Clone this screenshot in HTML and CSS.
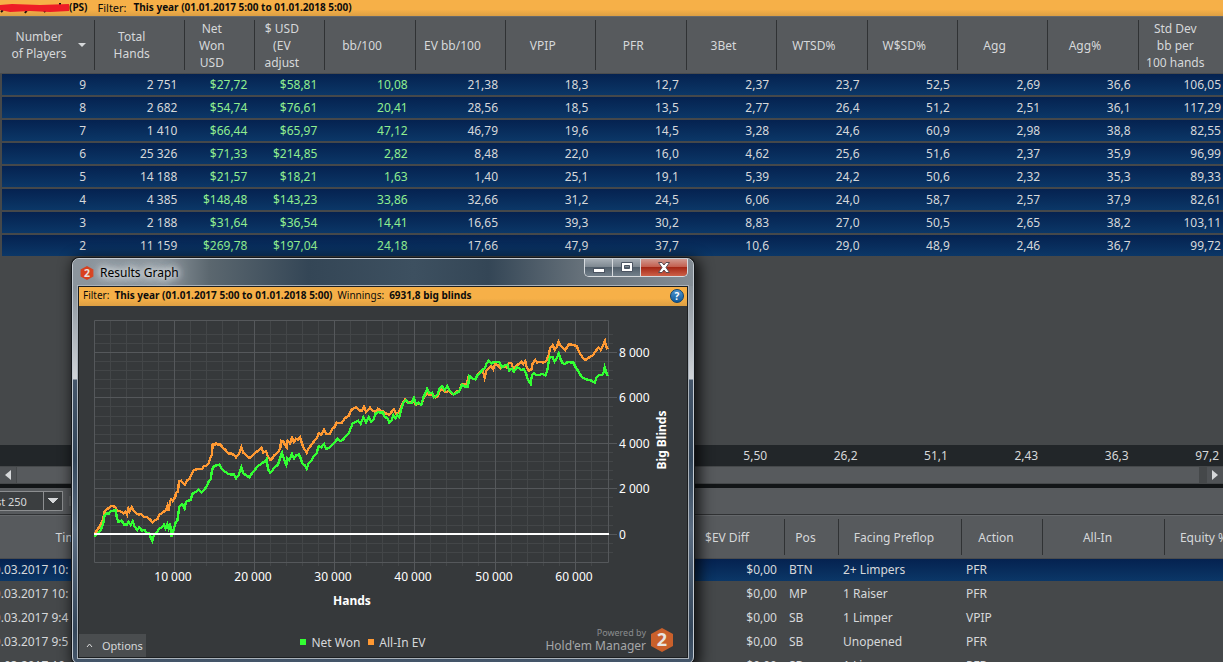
FILE: index.html
```html
<!DOCTYPE html>
<html lang="en">
<head>
  <meta charset="UTF-8">
  <meta name="viewport" content="width=device-width, initial-scale=1.0">
  <title>Results Graph</title>
  <link rel="stylesheet" href="styles.css">
</head>
<body>

  <div class="filter-bar">
    <svg class="scribble" width="69" height="13" viewBox="0 0 69 13" aria-hidden="true">
      <path d="M1 11l2-2M25 12l2-3M44 11l2-2M59 3h2" stroke="#111" stroke-width="2" />
      <path d="M0 4L12 3L40 4L69 3V10L50 11L30 10L10 11L0 9Z" fill="#ee1c25" />
    </svg>
    <b>(PS)</b>
    <span class="filter-label">Filter:</span>
    <b>This year (01.01.2017 5:00 to 01.01.2018 5:00)</b>
  </div>

  <main class="stats-pane">
    <table class="grid stats">
      <colgroup>
        <col class="w-players"><col class="w-stat"><col class="w-money"><col class="w-money"><col class="w-stat">
        <col class="w-stat"><col class="w-stat"><col class="w-stat"><col class="w-stat"><col class="w-stat">
        <col class="w-stat"><col class="w-stat"><col class="w-stat"><col class="w-stat">
      </colgroup>
      <thead>
        <tr>
          <th class="sorted"><div>Number<br>of Players</div></th>
          <th><div>Total<br>Hands</div></th>
          <th><div>Net<br>Won<br>USD</div></th>
          <th><div>$ USD<br>(EV<br>adjust</div></th>
          <th><div>bb/100</div></th>
          <th><div>EV bb/100</div></th>
          <th><div>VPIP</div></th>
          <th><div>PFR</div></th>
          <th><div>3Bet</div></th>
          <th><div>WTSD%</div></th>
          <th><div>W$SD%</div></th>
          <th><div>Agg</div></th>
          <th><div>Agg%</div></th>
          <th><div>Std Dev<br>bb per<br>100 hands</div></th>
        </tr>
      </thead>
      <tbody>
        <tr><td>9</td><td>2 751</td><td class="win">$27,72</td><td class="win">$58,81</td><td class="win">10,08</td><td>21,38</td><td>18,3</td><td>12,7</td><td>2,37</td><td>23,7</td><td>52,5</td><td>2,69</td><td>36,6</td><td>106,05</td></tr>
        <tr><td>8</td><td>2 682</td><td class="win">$54,74</td><td class="win">$76,61</td><td class="win">20,41</td><td>28,56</td><td>18,5</td><td>13,5</td><td>2,77</td><td>26,4</td><td>51,2</td><td>2,51</td><td>36,1</td><td>117,29</td></tr>
        <tr><td>7</td><td>1 410</td><td class="win">$66,44</td><td class="win">$65,97</td><td class="win">47,12</td><td>46,79</td><td>19,6</td><td>14,5</td><td>3,28</td><td>24,6</td><td>60,9</td><td>2,98</td><td>38,8</td><td>82,55</td></tr>
        <tr><td>6</td><td>25 326</td><td class="win">$71,33</td><td class="win">$214,85</td><td class="win">2,82</td><td>8,48</td><td>22,0</td><td>16,0</td><td>4,62</td><td>25,6</td><td>51,6</td><td>2,37</td><td>35,9</td><td>96,99</td></tr>
        <tr><td>5</td><td>14 188</td><td class="win">$21,57</td><td class="win">$18,21</td><td class="win">1,63</td><td>1,40</td><td>25,1</td><td>19,1</td><td>5,39</td><td>24,2</td><td>50,6</td><td>2,32</td><td>35,3</td><td>89,33</td></tr>
        <tr><td>4</td><td>4 385</td><td class="win">$148,48</td><td class="win">$143,23</td><td class="win">33,86</td><td>32,66</td><td>31,2</td><td>24,5</td><td>6,06</td><td>24,0</td><td>58,7</td><td>2,57</td><td>37,9</td><td>82,61</td></tr>
        <tr><td>3</td><td>2 188</td><td class="win">$31,64</td><td class="win">$36,54</td><td class="win">14,41</td><td>16,65</td><td>39,3</td><td>30,2</td><td>8,83</td><td>27,0</td><td>50,5</td><td>2,65</td><td>38,2</td><td>103,11</td></tr>
        <tr><td>2</td><td>11 159</td><td class="win">$269,78</td><td class="win">$197,04</td><td class="win">24,18</td><td>17,66</td><td>47,9</td><td>37,7</td><td>10,6</td><td>29,0</td><td>48,9</td><td>2,46</td><td>36,7</td><td>99,72</td></tr>
      </tbody>
    </table>

    <table class="grid totals">
      <colgroup>
        <col class="w-players"><col class="w-stat"><col class="w-money"><col class="w-money"><col class="w-stat">
        <col class="w-stat"><col class="w-stat"><col class="w-stat"><col class="w-stat"><col class="w-stat">
        <col class="w-stat"><col class="w-stat"><col class="w-stat"><col class="w-stat">
      </colgroup>
      <tbody>
        <tr><td></td><td></td><td></td><td></td><td></td><td></td><td></td><td></td><td>5,50</td><td>26,2</td><td>51,1</td><td>2,43</td><td>36,3</td><td>97,2</td></tr>
      </tbody>
    </table>

    <div class="scrollbar">
      <button class="scroll-btn" aria-label="Scroll left"><svg width="6" height="10"><path d="M6 0V10L0 5Z" /></svg></button>
      <div class="scroll-thumb"></div>
      <button class="scroll-btn" aria-label="Scroll right"><svg width="6" height="10"><path d="M0 0V10L6 5Z" /></svg></button>
    </div>
  </main>

  <section class="hands-pane">
    <div class="hands-scroll">
      <div class="toolbar">
        <select class="limit" aria-label="Hands shown">
          <option>Last 250</option>
        </select>
        <span class="grip"></span>
      </div>
      <table class="grid hands">
        <colgroup>
          <col class="w-time"><col class="w-rest"><col class="w-diff"><col class="w-pos"><col class="w-facing">
          <col class="w-action"><col class="w-allin"><col class="w-equity">
        </colgroup>
        <thead>
          <tr>
            <th><div>Time</div></th><th><div></div></th><th><div>$EV Diff</div></th><th><div>Pos</div></th>
            <th><div>Facing Preflop</div></th><th><div>Action</div></th><th><div>All-In</div></th><th><div>Equity %</div></th>
          </tr>
        </thead>
        <tbody>
          <tr class="selected"><td>30.03.2017 10:</td><td></td><td class="num">$0,00</td><td>BTN</td><td>2+ Limpers</td><td>PFR</td><td></td><td></td></tr>
          <tr><td>30.03.2017 10:</td><td></td><td class="num">$0,00</td><td>MP</td><td>1 Raiser</td><td>PFR</td><td></td><td></td></tr>
          <tr><td>30.03.2017 9:4</td><td></td><td class="num">$0,00</td><td>SB</td><td>1 Limper</td><td>VPIP</td><td></td><td></td></tr>
          <tr><td>30.03.2017 9:5</td><td></td><td class="num">$0,00</td><td>SB</td><td>Unopened</td><td>PFR</td><td></td><td></td></tr>
          <tr><td>30.03.2017 10:</td><td></td><td class="num">$0,00</td><td>SB</td><td>1 Limper</td><td>PFR</td><td></td><td></td></tr>
        </tbody>
      </table>
    </div>
  </section>

  <section class="window" aria-label="Results Graph">
    <header class="caption">
      <svg class="app-icon" width="14" height="14" viewBox="0 0 22 24" aria-hidden="true">
        <path d="M11 0L22 6V18L11 24L0 18V6Z" fill="#d9411e" />
        <text x="11" y="18" class="hex-digit">2</text>
      </svg>
      <h1>Results Graph</h1>
      <div class="caption-buttons">
        <button class="cap-btn minimize" aria-label="Minimize">
          <svg width="14" height="12"><rect x="1.5" y="6.5" width="11" height="4" fill="#fff" stroke="#4b5462" /></svg>
        </button>
        <button class="cap-btn maximize" aria-label="Maximize">
          <svg width="12" height="12"><path d="M.5 .5H11.5V9.5H.5ZM3.5 3.5V6.5H8.5V3.5Z" fill="#fff" fill-rule="evenodd" stroke="#4b5462" /></svg>
        </button>
        <button class="cap-btn close" aria-label="Close">
          <svg width="12" height="12"><path d="M.5 .5H4L6 3L8 .5H11.5L8 5.5L11.5 10.5H8L6 8L4 10.5H.5L4 5.5Z" fill="#fff" stroke="#5a4a50" /></svg>
        </button>
      </div>
    </header>

    <div class="client">
      <div class="graph-filter">
        <span>Filter:</span>
        <b>This year (01.01.2017 5:00 to 01.01.2018 5:00)</b>
        <span>Winnings:</span>
        <b>6931,8 big blinds</b>
        <button class="help" aria-label="Help">?</button>
      </div>

      <svg class="chart" viewBox="0 0 608 321" role="img" aria-label="Big blinds won by hands played">
        <path class="minor" d="M31.5 14V260M47.5 14V260M63.5 14V260M79.5 14V260M111.5 14V260M127.5 14V260M143.5 14V260M159.5 14V260M191.5 14V260M207.5 14V260M223.5 14V260M239.5 14V260M271.5 14V260M287.5 14V260M303.5 14V260M319.5 14V260M351.5 14V260M367.5 14V260M383.5 14V260M399.5 14V260M432.5 14V260M448.5 14V260M464.5 14V260M480.5 14V260M512.5 14V260" />
        <path class="minor" d="M15 28.5H534M15 37.5H534M15 55.5H534M15 64.5H534M15 73.5H534M15 82.5H534M15 100.5H534M15 110.5H534M15 119.5H534M15 128.5H534M15 146.5H534M15 155.5H534M15 164.5H534M15 173.5H534M15 191.5H534M15 200.5H534M15 209.5H534M15 219.5H534M15 237.5H534M15 246.5H534" />
        <path class="major" d="M95.5 14V265M175.5 14V265M255.5 14V265M335.5 14V265M416.5 14V265M496.5 14V265M15 46.5H538M15 91.5H538M15 137.5H538M15 182.5H538M15 228.5H538" />
        <path class="major" d="M15.5 14.5H529.5V256.5H15.5Z" />

        <g transform="translate(11 4) scale(.33333)">
          <polyline class="ev" points="14,672 18,665 25,655 32,643 40,625 44,605 50,597 58,594 63,589 70,588 76,592 82,602 92,604 100,610 106,606 111,614 115,595 119,604 125,592 130,600 138,610 146,614 152,612 160,620 172,622 180,628 187,637 194,630 202,628 208,614 218,608 228,600 232,588 236,602 240,575 244,568 248,573 256,560 258,548 264,545 267,513 273,512 279,520 285,524 292,510 298,508 304,495 311,480 320,478 328,477 335,478 342,468 348,467 356,460 361,445 366,432 368,402 374,405 378,399 384,404 392,404 398,414 405,418 415,430 424,431 432,435 438,442 444,435 450,425 454,412 460,428 468,434 478,444 486,438 494,430 502,424 508,420 514,413 520,428 528,424 534,440 541,450 547,445 552,436 560,431 566,424 571,415 573,392 580,395 585,405 590,412 593,392 600,400 606,383 612,396 618,386 624,390 630,382 635,398 640,412 650,428 656,415 664,405 672,394 680,386 686,370 694,374 702,358 708,372 720,372 726,357 733,352 740,338 748,340 756,338 764,325 776,318 784,300 792,294 800,292 808,302 815,302 822,290 828,306 834,300 840,293 848,302 856,306 864,296 872,303 880,304 890,312 898,314 906,304 912,298 918,310 926,308 932,294 938,280 945,268 952,276 960,278 970,272 978,284 986,280 994,282 1002,262 1010,250 1018,255 1026,256 1036,262 1044,258 1050,240 1058,238 1068,247 1076,243 1084,250 1092,252 1100,245 1108,243 1114,225 1122,222 1130,222 1136,200 1146,205 1156,208 1162,194 1172,186 1178,180 1184,203 1190,180 1198,172 1204,168 1210,178 1216,160 1224,166 1232,175 1240,168 1248,172 1256,160 1264,160 1270,175 1278,170 1288,160 1294,154 1300,162 1306,154 1310,172 1316,182 1324,180 1328,160 1336,150 1342,158 1350,155 1358,158 1368,154 1372,145 1376,135 1380,115 1388,105 1394,120 1400,112 1406,95 1410,106 1418,114 1426,120 1432,110 1438,102 1444,104 1452,106 1460,108 1466,122 1472,134 1480,145 1486,150 1494,144 1502,140 1510,134 1518,122 1526,112 1532,120 1540,104 1545,93 1548,108 1553,118" />
          <polyline class="net" points="12,678 18,675 24,668 32,660 40,640 44,615 50,610 56,612 62,604 70,602 78,602 80,620 85,636 95,632 103,644 110,644 115,635 122,645 128,634 134,650 142,660 148,652 156,662 164,660 170,670 178,670 182,682 187,692 192,675 200,668 208,656 216,652 222,644 226,655 232,642 236,655 240,640 245,680 250,662 256,640 262,632 266,605 268,590 276,582 284,596 288,575 295,572 302,570 308,550 318,546 326,538 334,548 342,540 350,530 356,515 362,508 366,480 372,468 380,466 388,464 396,478 406,486 416,492 424,494 432,494 438,505 446,496 454,472 460,490 468,496 478,502 486,490 494,480 502,470 510,464 518,458 526,454 530,448 534,478 541,488 548,480 554,472 564,464 570,445 576,428 580,442 586,458 589,465 592,445 598,450 606,432 612,446 618,436 626,433 632,445 637,460 645,466 650,476 656,460 664,452 672,438 680,430 686,408 694,412 702,402 708,416 718,414 728,404 736,396 742,386 750,394 760,388 768,378 776,370 782,355 788,340 796,336 804,332 812,342 820,322 828,338 836,322 844,335 850,330 856,312 864,306 872,308 878,306 884,320 892,325 898,338 904,332 910,316 916,325 922,315 928,322 934,298 940,278 948,270 956,280 964,280 972,264 978,282 986,278 994,284 1000,262 1006,250 1011,237 1018,250 1026,248 1032,262 1042,255 1048,236 1056,228 1064,240 1072,228 1080,244 1090,254 1100,248 1108,244 1116,224 1124,230 1134,230 1138,198 1146,205 1156,208 1162,196 1170,190 1178,178 1184,175 1190,160 1196,152 1204,160 1212,156 1220,155 1228,156 1236,172 1244,166 1252,164 1258,182 1266,176 1272,185 1280,172 1288,175 1294,180 1302,178 1308,190 1314,210 1322,222 1326,195 1332,190 1340,195 1348,195 1356,192 1366,196 1372,180 1376,155 1380,140 1388,142 1394,155 1400,145 1406,130 1412,148 1418,160 1426,162 1434,155 1442,158 1450,158 1456,170 1464,182 1472,196 1480,204 1488,208 1496,210 1504,212 1514,218 1520,202 1528,195 1536,195 1540,190 1544,172 1548,185 1553,198" />
        </g>
        <path class="zero" d="M15 228H530" />

        <g class="ticks-x">
          <text x="94" y="275">10 000</text>
          <text x="174" y="275">20 000</text>
          <text x="254" y="275">30 000</text>
          <text x="334" y="275">40 000</text>
          <text x="415" y="275">50 000</text>
          <text x="495" y="275">60 000</text>
        </g>
        <g class="ticks-y">
          <text x="540" y="51">8 000</text>
          <text x="540" y="96">6 000</text>
          <text x="540" y="142">4 000</text>
          <text x="540" y="187">2 000</text>
          <text x="540" y="233">0</text>
        </g>
        <text class="axis" x="273" y="299">Hands</text>
        <text class="axis" transform="translate(587 134) rotate(-90)">Big Blinds</text>
      </svg>

      <footer class="graph-footer">
        <button class="options">
          <svg width="7" height="5"><path d="M1 4L3.5 1L6 4" fill="none" stroke="#ddd" /></svg>
          Options
        </button>
        <div class="legend">
          <span class="key net-key">Net Won</span>
          <span class="key ev-key">All-In EV</span>
        </div>
        <div class="brand">
          <div class="brand-text"><small>Powered by</small>Hold'em Manager</div>
          <svg width="22" height="24" viewBox="0 0 22 24" aria-hidden="true">
            <path d="M11 0L22 6V18L11 24L0 18V6Z" fill="#c9602b" />
            <text x="11" y="18" class="hex-digit">2</text>
          </svg>
        </div>
      </footer>
    </div>
  </section>

</body>
</html>
```
FILE: styles.css
```css
* {
  box-sizing: border-box;
}

body {
  margin: 0;
  height: 100vh;
  display: flex;
  flex-direction: column;
  position: relative;
  overflow: hidden;
  background: #45484a;
  color: #d6d8da;
  font-family: "Noto Sans", "Open Sans", sans-serif;
  font-size: 12px;
  line-height: 17px;
}

button,
select {
  padding: 0;
  border: none;
  color: inherit;
  font: inherit;
}

/* top filter line */
.filter-bar {
  display: flex;
  align-items: center;
  flex: none;
  height: 16px;
  padding-bottom: 2px;
  background: linear-gradient(#f6b048 60%, #dc9f43);
  color: #0c0c0c;
  font-size: 10px;
}

.filter-label {
  margin: 0 7px 0 10px;
  font-size: 11px;
}

/* tables */
.grid {
  border-collapse: separate;
  border-spacing: 0;
  table-layout: fixed;
}

.grid th,
.grid td {
  padding: 0;
  font-weight: normal;
  white-space: nowrap;
}

.grid th {
  background: #575a5d;
  border-top: 1px solid #65686b;
  border-bottom: 1px solid #4a4c4e;
}

.grid th div {
  display: flex;
  align-items: center;
  justify-content: center;
  text-align: center;
  border-right: 1px solid #303234;
}

.grid td {
  overflow: hidden;
}

/* statistics by number of players */
.stats-pane {
  flex: 1;
  min-height: 0;
  display: flex;
  flex-direction: column;
  overflow: hidden;
}

.stats,
.totals {
  width: 1229px;
  min-width: 100%;
}

.w-players { width: 95px; }
.w-money { width: 70px; }

.stats th {
  height: 58px;
}

.stats th div {
  height: 50px;
  padding-right: 16px;
}

.stats .sorted {
  position: relative;
}

.sorted::after {
  content: "";
  position: absolute;
  right: 9px;
  top: 26px;
  border: 4px solid transparent;
  border-top-color: #d6d8da;
}

.stats td,
.totals td {
  padding-right: 8px;
  text-align: right;
}

.stats td {
  height: 23px;
  border-bottom: 2px solid #45484a;
  background: linear-gradient(#052250, #0b3767) padding-box;
}

.stats td:first-child {
  padding-right: 9px;
  border-left: 2px solid #45484a;
}

.stats .win {
  color: #90ee90;
}

.totals {
  margin-top: auto;
  background: #222629;
}

.totals td {
  height: 21px;
  padding-right: 10px;
}

.scrollbar {
  display: flex;
  flex: none;
  height: 18px;
  padding: 1px 0;
  background: #45484a;
}

.scroll-btn {
  width: 16px;
  background: #505356;
}

.scroll-btn path {
  fill: #d6d8da;
}

.scroll-thumb {
  flex: 1;
  margin: 0 8px 0 1px;
  background: #575a5d;
}

/* list of hands, scrolled a little to the right */
.hands-pane {
  flex: none;
  height: 178px;
  overflow: hidden;
  border-top: 4px solid #121517;
}

.hands-scroll {
  margin-left: -24px;
}

.toolbar {
  display: flex;
  align-items: center;
  gap: 6px;
  height: 27px;
  background: #575a5d;
  border-bottom: 1px solid #303234;
}

.limit {
  width: 87px;
  height: 20px;
  padding-left: 7px;
  appearance: none;
  border: 1px solid #8c8e90;
  border-radius: 0;
  background:
    conic-gradient(from 315deg at 50% 100%, #d6d8da 90deg, transparent 0) right 4px top 6px / 10px 5px no-repeat,
    linear-gradient(#8c8e90, #8c8e90) right 18px top / 1px 100% no-repeat,
    #3b3e40;
  font-size: 11px;
}

.grip {
  width: 2px;
  height: 10px;
  background: #6b6e70;
}

.hands {
  width: 1280px;
  min-width: 100%;
}

.w-time { width: 200px; }
.w-rest { width: 506px; }
.w-diff { width: 103px; }
.w-pos { width: 54px; }
.w-facing { width: 123px; }
.w-action { width: 81px; }
.w-allin { width: 122px; }

.hands th {
  height: 44px;
}

.hands th div {
  height: 36px;
  padding-right: 12px;
}

.hands td {
  height: 24px;
  padding: 0 8px 3px 4px;
}

.hands td:first-child {
  padding-left: 11px;
}

.hands .num {
  text-align: right;
}

.hands .selected td {
  background: linear-gradient(#052250, #0b3767 22px, #45484a 22px);
}

/* floating graph window */
.window {
  position: absolute;
  left: 72px;
  top: 258px;
  width: 622px;
  padding: 0 5px 5px;
  border: 1px solid #c3cad1;
  border-radius: 7px;
  background: linear-gradient(#89929a 28px, #d0d4d8 120px, #45566a 121px, #33465a 200px, #5a6b80 270px, #34465a 370px, #45566a);
  box-shadow: 0 0 0 1px #15181b, 3px 3px 14px 3px rgba(0, 0, 0, .75);
}

.caption {
  display: flex;
  align-items: center;
  height: 27px;
  margin: 0 -5px;
  padding: 0 5px 0 7px;
  border-radius: 6px 6px 0 0;
  background: linear-gradient(90deg, #8b949c, #8d969d 14%, #5b676f 22%, #344656 38%, #3d5060 55%, #344656 67%, #66717a 82%, #838c94);
}

.caption h1 {
  margin: 0 0 0 6px;
  color: #000;
  font-size: 12px;
  font-weight: normal;
  text-shadow: 0 0 6px #fff, 0 0 8px #dfe4e8, 0 0 12px #ccd2d8, 0 0 14px #ccd2d8;
}

.caption-buttons {
  display: flex;
  align-self: flex-start;
  margin-left: auto;
  border: 1px solid #d6dade;
  border-top: none;
  border-radius: 0 0 5px 5px;
  overflow: hidden;
}

.cap-btn {
  display: flex;
  align-items: center;
  justify-content: center;
  width: 28px;
  height: 17px;
  border-right: 1px solid #d6dade;
  background: linear-gradient(#a5adb4, #7b858e 50%, #525f6b 50%, #73808b);
}

.close {
  width: 46px;
  border-right: none;
  background: linear-gradient(#d19a90, #c25a49 50%, #a52816 50%, #cd6048);
}

.client {
  border: 1px solid #1c1f21;
  outline: 1px solid #aab2ba;
  background: #36393b;
}

.graph-filter {
  display: flex;
  align-items: center;
  gap: 5px;
  height: 19px;
  padding: 0 3px 2px 4px;
  background: linear-gradient(#f6b048 60%, #dc9f43);
  color: #0c0c0c;
  font-size: 10px;
}

.help {
  width: 14px;
  height: 14px;
  margin-left: auto;
  border: 1px solid #0b4273;
  border-radius: 50%;
  background: linear-gradient(#4f93cc, #0f5a9c);
  color: #fff;
  font-weight: bold;
  line-height: 12px;
}

.chart {
  display: block;
  width: 100%;
  fill: none;
}

.minor {
  stroke: #434648;
}

.major {
  stroke: #55585b;
}

.ev,
.net {
  stroke-width: 7;
  stroke-linejoin: miter;
  shape-rendering: crispEdges;
}

.ev {
  stroke: #ff9933;
}

.net {
  stroke: #33ff33;
}

.zero {
  stroke: #fff;
  stroke-width: 2;
}

.chart text {
  fill: #fff;
  font-size: 12px;
}

.ticks-x text,
.chart .axis {
  text-anchor: middle;
}

.chart .axis {
  font-weight: bold;
}

.graph-footer {
  display: grid;
  grid-template-columns: 1fr auto 1fr;
  align-items: end;
  height: 30px;
}

.options {
  display: flex;
  align-items: center;
  justify-self: start;
  gap: 9px;
  height: 23px;
  padding: 0 3px 1px 7px;
  background: #4a4d4f;
  font-size: 11px;
}

.legend {
  display: flex;
  gap: 8px;
  margin-right: 40px;
  padding-bottom: 6px;
}

.key::before {
  content: "";
  display: inline-block;
  width: 6px;
  height: 6px;
  margin-right: 5px;
  vertical-align: 2px;
  background: #33ff33;
}

.ev-key::before {
  background: #ff9933;
}

.brand {
  display: flex;
  align-items: center;
  justify-self: end;
  gap: 5px;
  padding: 0 14px 5px 0;
}

.brand-text {
  color: #a5a7a9;
  font-size: 12px;
  line-height: 13px;
  text-align: right;
}

.brand-text small {
  display: block;
  color: #8a8c8e;
  font-size: 9px;
  line-height: 12px;
}

.hex-digit {
  fill: #e8e4e0;
  font-size: 18px;
  font-weight: bold;
  text-anchor: middle;
}
```
